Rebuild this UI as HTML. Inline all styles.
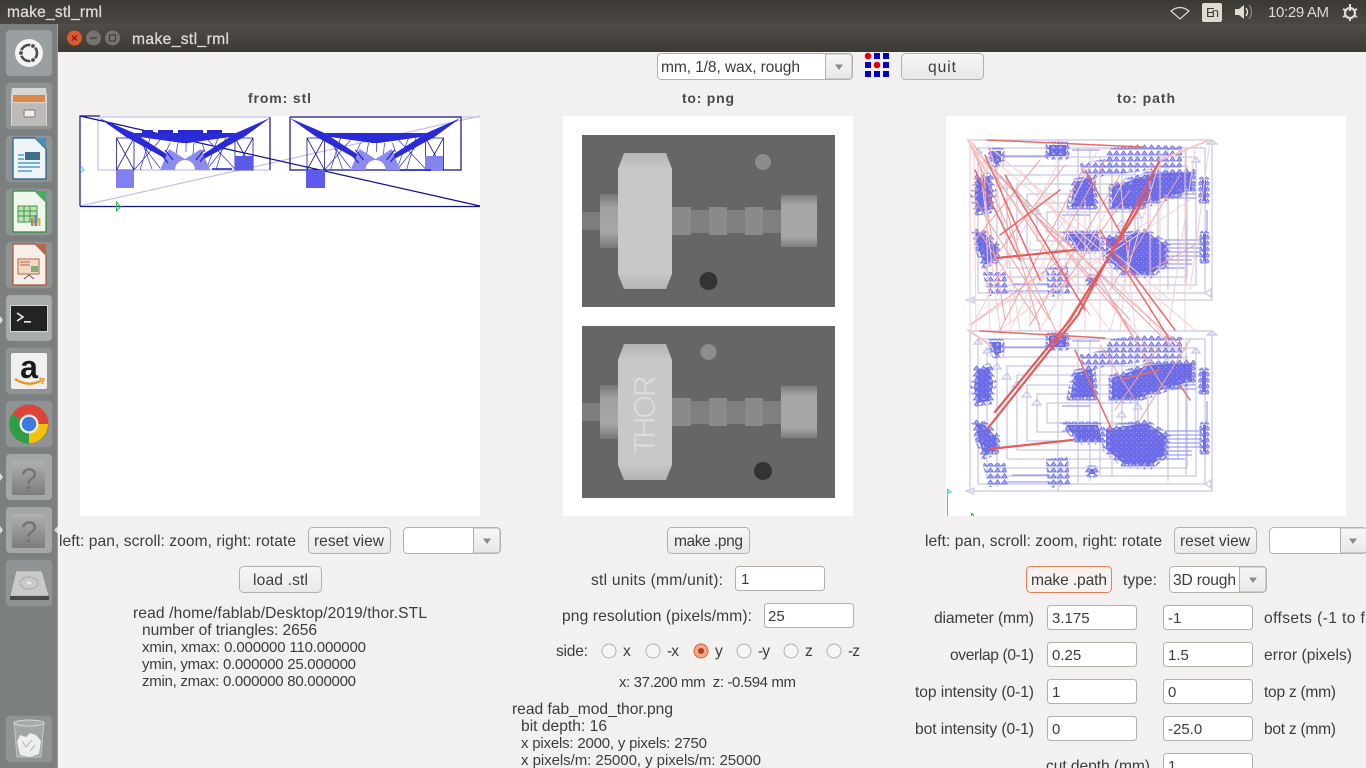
<!DOCTYPE html>
<html><head><meta charset="utf-8"><title>make_stl_rml</title>
<style>
html,body{margin:0;padding:0;width:1366px;height:768px;overflow:hidden;background:#f2f1f0}
svg{display:block}
text{font-family:"Liberation Sans",sans-serif;font-size:15.6px;fill:#3c3c3c}
.n{font-size:15px}
.b{font-weight:bold;font-size:14px;fill:#4a4a4a}
.t{fill:#dfdbd2;stroke:#dfdbd2;stroke-width:.3}
.btn{fill:url(#bg);stroke:#b3b1ac}
.inp{fill:#fff;stroke:#b3b1ac}
.tile{fill:#a4a8a8;fill-opacity:.5;stroke:#8d9192;stroke-width:.6}
.r{fill:#f7f6f5;stroke:#b3b1ac}
.d{fill:url(#dith);stroke:url(#tri);stroke-width:7;stroke-linejoin:round}
.s{fill:url(#tri);stroke:url(#tri);stroke-width:4;stroke-linejoin:round}
</style></head><body>
<svg width="1366" height="768" viewBox="0 0 1366 768" xmlns="http://www.w3.org/2000/svg">
<defs>
<linearGradient id="bg" x1="0" y1="0" x2="0" y2="1"><stop offset="0" stop-color="#f8f7f6"/><stop offset="1" stop-color="#e9e8e6"/></linearGradient>
<linearGradient id="top" x1="0" y1="0" x2="0" y2="1"><stop offset="0" stop-color="#3b3934"/><stop offset="1" stop-color="#4b4843"/></linearGradient>
<linearGradient id="tb" x1="0" y1="0" x2="0" y2="1"><stop offset="0" stop-color="#504c47"/><stop offset="1" stop-color="#3d3a36"/></linearGradient>
<linearGradient id="sh1" x1="0" y1="0" x2="0" y2="1"><stop offset="0" stop-color="#777"/><stop offset=".25" stop-color="#a0a0a0"/><stop offset=".7" stop-color="#a8a8a8"/><stop offset="1" stop-color="#777"/></linearGradient>
<linearGradient id="sh2" x1="0" y1="0" x2="0" y2="1"><stop offset="0" stop-color="#7d7d7d"/><stop offset=".2" stop-color="#a6a6a6"/><stop offset=".8" stop-color="#a6a6a6"/><stop offset="1" stop-color="#7d7d7d"/></linearGradient>
<linearGradient id="hd" x1="0" y1="0" x2="0" y2="1"><stop offset="0" stop-color="#b4b4b4"/><stop offset=".12" stop-color="#c8c8c8"/><stop offset=".88" stop-color="#c8c8c8"/><stop offset="1" stop-color="#b4b4b4"/></linearGradient>
<linearGradient id="q" x1="0" y1="0" x2="0" y2="1"><stop offset="0" stop-color="#b0b0b0"/><stop offset="1" stop-color="#7c7c7c"/></linearGradient>
<pattern id="dith" width="5" height="5" patternUnits="userSpaceOnUse"><rect width="5" height="5" fill="#6c6ce8"/><rect x="1" y="1" width="1" height="1" fill="#9a9af2"/><rect x="3" y="3" width="1" height="1" fill="#8a8af0"/></pattern>
<pattern id="tri" width="7" height="6" patternUnits="userSpaceOnUse"><path d="M0.500 5L3.500 .8L6.500 5Z" fill="#a8a8f0" stroke="#6a6ae0" stroke-width=".8"/></pattern>

<g id="png">
<rect x="582" y="135" width="253" height="172" fill="#666"/>
<rect x="582" y="212" width="18" height="18" fill="#7d7d7d"/>
<rect x="600" y="194" width="18" height="54" fill="url(#sh1)"/>
<rect x="672" y="207" width="19" height="28" fill="#8a8a8a"/>
<rect x="691" y="210" width="18" height="23" fill="#7f7f7f"/>
<rect x="709" y="207" width="18" height="28" fill="#8a8a8a"/>
<rect x="727" y="210" width="18" height="23" fill="#7f7f7f"/>
<rect x="745" y="207" width="18" height="28" fill="#8a8a8a"/>
<rect x="763" y="210" width="18" height="23" fill="#7f7f7f"/>
<rect x="781" y="195" width="36" height="52" fill="url(#sh2)"/>
<polygon points="624,153 666,153 672,169 672,274 666,289 624,289 618,274 618,169" fill="url(#hd)"/>
</g>

<g id="set">
<g fill="none" stroke="#c6c6e4" stroke-width="1.200">
<rect x="970" y="140" width="242" height="160"/>
<rect x="978" y="148" width="227" height="145"/>
<rect x="987" y="157" width="209" height="128"/>
<path d="M997 166H1187V277H997ZM1007 175H1178V268H1007ZM1017 184H1168V259H1017ZM1027 194H1158V250H1027ZM1037 203H1148V241H1037ZM1047 212H1138V232H1047Z"/>
<path d="M1058 140V300M1078 148V293M1090 150V290M1100 157V285M1112 155V285M1122 160V270M1135 160V275M1148 166V277M1168 148V290M1186 150V285"/>
<path d="M966 300l8-3v6zM1205 293l6-4v8zM1212 140l5 4-10 0zM1196 157l-4 5h8zM987 157l-4 5h8zM978 148l-4 5h8zM997 172l-5 6h9zM1007 182l-5 6h9zM1017 190l-5 6h9zM1027 200l-5 6h9zM1037 208l-5 6h9zM1122 220l-5 6h9zM1138 212l-4 6h8z"/>
</g>
<g fill="none" stroke="#8a8aea" stroke-width="1">
<path d="M1165 174H1196M1165 178H1196M1165 182H1196M1165 186H1196M1165 190H1196M1165 194H1196M1165 198H1196"/>
<path d="M1165 240H1202M1165 244H1202M1165 248H1202M1160 252H1200M1160 256H1200M1160 260H1192M1155 264H1192M1155 268H1185"/>
<path d="M1000 156H1050M1072 150H1100M1060 291H1005M1012 284H1050M1062 215H1090M1062 240H1100M1060 232H1075"/>
<path d="M1207 210V232"/>
</g>
<polygon class="s" points="1112,150 1140,146 1180,148 1180,166 1150,168 1120,172 1100,170"/>
<polygon class="s" points="1082,165 1112,160 1112,172 1086,178"/>
<polygon class="d" points="977,178 989,176 993,192 990,210 977,212 974,196"/>
<polygon class="d" points="975,232 985,234 997,247 996,260 984,265 979,250"/>
<polygon class="d" points="1049,145 1066,145 1066,156 1049,156"/>
<polygon class="d" points="991,151 1001,151 1001,162 995,164"/>
<polygon class="d" points="1075,182 1092,178 1095,206 1070,207"/>
<polygon class="d" points="1112,187 1150,174 1192,172 1192,190 1164,198 1136,208 1112,208"/>
<polygon class="d" points="1066,234 1098,234 1102,250 1078,250"/>
<polygon class="d" points="1106,238 1146,232 1167,245 1165,264 1150,275 1124,273 1106,258"/>
<rect class="d" x="1202" y="180" width="4" height="21"/>
<rect class="d" x="1203" y="234" width="3" height="27"/>
<polygon class="s" points="985,274 1004,274 1006,292 990,294"/>
<polygon class="s" points="1048,270 1066,268 1068,292 1050,295"/>
<polygon class="d" points="1089,278 1095,278 1095,283 1089,283"/>
</g>
</defs>

<!-- window background -->
<rect width="1366" height="768" fill="#f2f1f0"/>

<!-- launcher -->
<rect x="0" y="24" width="58" height="744" fill="#7b7f80"/>
<rect x="57" y="24" width="1" height="744" fill="#9a9d9e"/>
<rect x="6" y="30" width="46" height="46" rx="4" fill="#9aa0a2" stroke="#8d9192" stroke-width=".6"/>
<circle cx="29" cy="53" r="14" fill="#f4f4f2"/>
<circle cx="29" cy="53" r="8" fill="none" stroke="#4c4c4c" stroke-width="2.600"/>
<circle cx="21" cy="53" r="2.400" fill="#4c4c4c" stroke="#f4f4f2"/><circle cx="33" cy="46" r="2.400" fill="#4c4c4c" stroke="#f4f4f2"/><circle cx="33" cy="60" r="2.400" fill="#4c4c4c" stroke="#f4f4f2"/>

<rect x="6" y="83" width="46" height="46" class="tile" rx="4"/>
<path d="M12 88H46L47 96V126H11V96Z" fill="#d8d6d2"/><rect x="13" y="95" width="32" height="7" fill="#d9894a"/><rect x="12" y="103" width="34" height="23" fill="#bdbbb7"/><rect x="24" y="110" width="11" height="7" rx="1" fill="#efeeec" stroke="#7d7b78"/>

<rect x="6" y="136" width="46" height="46" class="tile" rx="4"/>
<path d="M13 138H35L46 149V179H13Z" fill="#eef3f6" stroke="#1f5f85" stroke-width="1.200"/><path d="M35 138L46 149V138Z" fill="#4a8db5"/><rect x="25" y="152" width="15" height="8" fill="#3d6f8f"/><path d="M18 155H24M18 159H24M18 163H40M18 167H40M18 171H32" stroke="#4f9dc6" stroke-width="1.600"/>

<rect x="6" y="189" width="46" height="46" class="tile" rx="4"/>
<path d="M13 191H35L46 202V232H13Z" fill="#f0f5ee" stroke="#2f8a3a" stroke-width="1.200"/><path d="M35 191L46 202V191Z" fill="#43b35a"/><path d="M18 206H37V222H18ZM18 211H37M18 216H37M24 206V222M30 206V222" fill="#bde3b5" stroke="#3d9a48" stroke-width="1"/><rect x="31" y="218" width="2.500" height="8" fill="#d97a3a"/><rect x="34.500" y="215" width="2.500" height="11" fill="#4a8db5"/><rect x="38" y="218" width="2.500" height="8" fill="#d9b83a"/>

<rect x="6" y="242" width="46" height="46" class="tile" rx="4"/>
<path d="M13 244H35L46 255V285H13Z" fill="#f6efe9" stroke="#a4583a" stroke-width="1.200"/><path d="M35 244L46 255V244Z" fill="#b96a45"/><rect x="18" y="259" width="21" height="15" fill="#f3d9c4" stroke="#b4673f"/><path d="M20 262H30M20 265H30" stroke="#b4673f"/><rect x="31" y="266" width="7" height="6" fill="#7fae7b"/><path d="M24 279L29 275L34 279" stroke="#555" fill="none"/>

<rect x="6" y="295" width="46" height="46" rx="4" fill="#a8acad" stroke="#8d9192" stroke-width=".6"/>
<rect x="10" y="305" width="38" height="27" fill="#d4d4d2"/><rect x="11" y="306" width="36" height="25" fill="#232323"/><path d="M17 313L23 317L17 321" stroke="#eee" stroke-width="1.600" fill="none"/><rect x="24" y="321" width="7" height="1.600" fill="#eee"/>

<rect x="6" y="348" width="46" height="46" class="tile" rx="4"/>
<rect x="11" y="353" width="36" height="36" rx="2" fill="#efefed"/>
<text x="29" y="378" text-anchor="middle" style="font-size:32px;font-weight:bold;fill:#1a1a1a">a</text>
<path d="M15 379Q29 388 42 380" stroke="#e8951e" stroke-width="2.200" fill="none"/><path d="M39 378L44 379L42 384" stroke="#e8951e" stroke-width="1.400" fill="none"/>

<rect x="6" y="401" width="46" height="46" class="tile" rx="4"/>
<circle cx="29" cy="424" r="19.500" fill="#db4437"/>
<path d="M29 424L12 414A19.500 19.500 0 0 0 19 441Z" fill="#2f9e44"/>
<path d="M29 424L19 441A19.500 19.500 0 0 0 29 443.500A19.500 19.500 0 0 0 47 431Z" fill="#2f9e44"/>
<path d="M29 424H48A19.500 19.500 0 0 1 29 443.500Z" fill="#f4c20d"/>
<circle cx="29" cy="424" r="9.500" fill="#f2f2f2"/><circle cx="29" cy="424" r="7.200" fill="#3f78e0"/>

<rect x="6" y="454" width="46" height="46" rx="4" fill="#a4a7a7"/>
<rect x="12" y="461" width="33" height="34" rx="2" fill="url(#q)"/>
<text x="29" y="489" text-anchor="middle" style="font-size:30px;fill:#747474">?</text>
<rect x="6" y="507" width="46" height="46" rx="4" fill="#a4a7a7"/>
<rect x="12" y="514" width="33" height="34" rx="2" fill="url(#q)"/>
<text x="29" y="542" text-anchor="middle" style="font-size:30px;fill:#747474">?</text>

<rect x="6" y="560" width="46" height="46" class="tile" rx="4"/>
<path d="M16 571H42L49 596H10Z" fill="#c8c9c8" stroke="#8a8b8a" stroke-width=".6"/><rect x="10" y="596" width="39" height="4" fill="#4a4a4a"/><ellipse cx="29" cy="583" rx="9" ry="6" fill="none" stroke="#a6a7a6"/><ellipse cx="29" cy="583" rx="2.500" ry="1.500" fill="#e8e8e8"/>

<rect x="6" y="716" width="46" height="46" class="tile" rx="4"/>
<path d="M14 722H44L41 757H17Z" fill="#a3a6a6" stroke="#c5c7c7"/><ellipse cx="29" cy="723" rx="15" ry="3" fill="#a8abab" stroke="#d4d5d5"/>
<path d="M17 742L20 735L26 737L30 733L36 735L41 741L39 754L30 757L20 755Z" fill="#eceded"/>
<path d="M22 741L26 747L32 740M35 745L30 751" stroke="#b5b7b7" fill="none"/>

<path d="M0 316L3 320L0 324ZM0 473L3 477L0 481ZM0 526L3 530L0 534Z" fill="#dcdddd"/>
<path d="M58 526L54 530L58 534Z" fill="#dcdddd"/>

<!-- top bar -->
<rect width="1366" height="24" fill="url(#top)"/>
<text x="7" y="17" textLength="95" class="t">make_stl_rml</text>
<path d="M1171 11Q1180 4 1189 11L1180 19Z" fill="none" stroke="#dfdbd2" stroke-width="1.200"/>
<rect x="1202" y="3" width="20" height="19" rx="2" fill="#dfdbd2"/>
<text x="1206" y="17" textLength="13" style="font-size:13px;fill:#3c3a36">En</text>
<path d="M1235 9H1239L1244 5V19L1239 15H1235Z" fill="#dfdbd2"/><path d="M1246 8Q1249 12 1246 16" stroke="#dfdbd2" stroke-width="1.400" fill="none"/><path d="M1249 5Q1254 12 1249 19" stroke="#8a8780" stroke-width="1.200" fill="none"/>
<text x="1268" y="17" textLength="61" class="n" style="fill:#dfdbd2">10:29 AM</text>
<circle cx="1350" cy="13" r="5" fill="none" stroke="#dfdbd2" stroke-width="2.200"/>
<path d="M1350 4V11M1343 9L1345 10M1357 9L1355 10M1343 17L1345 16M1357 17L1355 16M1350 19V21" stroke="#dfdbd2" stroke-width="2"/>

<!-- title bar -->
<rect x="58" y="24" width="1308" height="28" fill="url(#tb)"/>
<circle cx="74.500" cy="38" r="7.500" fill="#e0582b"/><path d="M72 35.500L77 40.500M77 35.500L72 40.500" stroke="#5a2410" stroke-width="1.100"/>
<circle cx="93.500" cy="38" r="7.500" fill="#76736d"/><rect x="90" y="37.500" width="7" height="1.300" fill="#3f3d39"/>
<circle cx="112.500" cy="38" r="7.500" fill="#76736d"/><rect x="109.500" y="35" width="6" height="6" fill="none" stroke="#3f3d39" stroke-width="1.100"/>
<text x="132" y="44" textLength="97" class="t">make_stl_rml</text>

<!-- toolbar -->
<rect x="657.500" y="53.500" width="195" height="26" rx="4" class="inp"/>
<path d="M825.500 54H849a3 3 0 0 1 3 3V76a3 3 0 0 1-3 3H825.500Z" fill="url(#bg)" stroke="#b3b1ac"/>
<path d="M835 64.500H843L839 70Z" fill="#8a8a8a"/>
<text x="661" y="72" textLength="139">mm, 1/8, wax, rough</text>
<g fill="#0000c8"><rect x="874" y="53" width="6" height="6"/><rect x="883" y="53" width="6" height="6"/><rect x="865" y="62" width="6" height="6"/><rect x="883" y="62" width="6" height="6"/><rect x="865" y="71" width="6" height="6"/><rect x="874" y="71" width="6" height="6"/><rect x="883" y="71" width="6" height="6"/></g>
<circle cx="868" cy="56" r="3.300" fill="#e00010"/><circle cx="877" cy="65" r="3.300" fill="#e00010"/>
<rect x="901.500" y="53.500" width="82" height="26" rx="4" class="btn"/>
<text x="928" y="72" textLength="28">quit</text>

<text x="248" y="103" textLength="63" class="b">from: stl</text>
<text x="682" y="103" textLength="52" class="b">to: png</text>
<text x="1117" y="103" textLength="58" class="b">to: path</text>

<!-- STL canvas -->
<rect x="80" y="116" width="400" height="400" fill="#fff"/>
<g fill="none">
<path d="M100 117H270M461 117H480M80 206L480 116M98 117V170H270" stroke="#c0c0e6" stroke-width="1.200"/>
<path d="M80 206V116H100M80 116L480 206M80 206.500H480M270 117V170M290 117H461V170H290V117" stroke="#101088" stroke-width="1.200"/>
</g>
<g id="fan">
<g fill="none" stroke="#1a1a88" stroke-width=".8">
<path d="M116.500 138H134V170H116.500ZM116.500 138L134 170M134 138L116.500 170M235 138H253V170H235ZM235 138L253 170M253 138L235 170"/>
</g>
<g fill="none" stroke="#3030d0" stroke-width=".7">
<path d="M134 134L160 168M140 136L152 169M150 138L140 170M160 140L134 170M170 143L166 152M178 143L176 154M186 143V152M194 143L193 154M202 143L205 152M208 140L236 170M218 138L206 170M226 136L216 170M235 134L208 168"/>
</g>
<g fill="#2a2ad8">
<polygon points="99,118 134,133 176,160 168,160 126,137"/>
<polygon points="270,118 236,133 194,160 202,160 244,137"/>
<polygon points="134,133 236,133 230,137 188,143 182,143 140,137"/>
</g>
<path d="M160 170L169 149L185 159L201 149L210 170H195A10 10 0 0 0 175 170Z" fill="#8c8cf0"/>
<path d="M160 153L168 163M165 150L173 160M208 152L200 162M204 150L196 160" stroke="#2222c8" stroke-width="1.200"/>
</g>
<use href="#fan" x="190.500"/>
<g fill="#2828d0"><rect x="142" y="130" width="11" height="4"/><rect x="158" y="130" width="15" height="4"/><rect x="178" y="130" width="25" height="4"/><rect x="207" y="130" width="15" height="4"/></g>
<rect x="235" y="156" width="18" height="14" fill="#5a5ae8"/>
<rect x="116" y="170" width="18" height="18" fill="#8080f0"/>
<rect x="306" y="170" width="19" height="18" fill="#5c5ce8"/>
<rect x="425" y="156" width="18" height="15" fill="#8484f0"/>
<path d="M400 170H431M212 169H232" stroke="#1a1ad0" stroke-width="1.500"/>
<path d="M81 166L84 170L81 172" fill="none" stroke="#20d0d8"/>
<path d="M116.500 202V211L120.500 207Z" fill="none" stroke="#20c040"/>

<!-- PNG canvas -->
<rect x="563" y="116" width="290" height="400" fill="#fff"/>
<use href="#png"/>
<use href="#png" y="191"/>
<circle cx="763" cy="162" r="8" fill="#8c8c8c"/>
<circle cx="708.500" cy="281" r="9" fill="#333"/>
<circle cx="708.500" cy="352" r="8" fill="#8c8c8c"/>
<circle cx="763" cy="471" r="9" fill="#333"/>
<text transform="translate(655 455) rotate(-90)" textLength="80" style="font-size:31px;fill:#dedede;stroke:#c8c8c8;stroke-width:.9">THOR</text>

<!-- Path canvas -->
<rect x="946" y="116" width="400" height="400" fill="#fff"/>
<use href="#set"/>
<use href="#set" y="191"/>
<g fill="none" stroke-linecap="round">
<path stroke="#f8cfcf" stroke-width="1" d="M968 140L1110 330M970 145V325M974 145L976 330M978 150L1000 330M984 160L990 330M987 145L1170 300M994 170L1020 330M1000 165L1195 330M1020 170L1185 360M1040 190L1130 330M1060 160L970 330M1100 145L1010 330M1130 170L1040 330M1160 160L1110 330M1185 150V330M1150 165V325M1120 180L1135 330M1085 200V330M978 320L1090 250M1000 330L1150 220M1040 300L1190 200M1195 150L1170 320M1210 140L1190 290M1160 150L1160 330M1130 240L1120 330M1100 210L1100 330M1070 210L1060 330M1010 200L1010 325M1030 240L1030 330"/>
<path stroke="#f2a3a3" stroke-width="1" d="M968 140L1060 340M972 142L1090 315M985 160L1130 320M1000 175L1150 350M1015 190L1170 345M1035 215L1185 350M980 165L1005 320M990 150L1040 330M1065 165L985 270M1040 160L975 240M1085 165L1000 330M1120 175L1030 325M1145 200L1065 325M1180 175L1110 290M970 325L1060 260M1150 270L1195 245M1095 270L1135 340M1110 300L1165 390M975 200L1050 320M978 230L1040 325M1105 160L1040 280M1130 190L1060 290M1190 340L1140 420M1160 345L1115 410M1100 345L1135 400"/>
<path stroke="#e86a6a" stroke-width="1.500" d="M987 140L1142 147M980 331L1105 338M1085 170L1130 250M1075 350L1112 430M1060 190L1000 235M975 170L1020 260M985 155L1040 280M1005 175L1085 310M1100 230L1170 340M1130 270L1175 330M1120 380L1160 370M1180 385L1190 400"/>
<path stroke="#e65a5a" stroke-width="2.200" d="M1160 160L1078 315L988 428M1150 190L1070 320L995 412M997 258L1075 250M990 449L1072 440"/>
<path stroke="#f8c4c4" stroke-width="2" d="M968 140L985 170M1210 140L1160 160M968 330L990 345"/>
</g>
<path d="M947.500 516V489M947.500 489L951 492L947.500 493" fill="none" stroke="#30d0e0" stroke-width="1.100"/>
<path d="M971.500 513V516M971.500 513L974 516" fill="none" stroke="#20c040"/>

<!-- bottom rows left -->
<text x="59" y="546" textLength="237">left: pan, scroll: zoom, right: rotate</text>
<rect x="308.500" y="527.500" width="82" height="26" rx="4" class="btn"/>
<text x="314" y="546" textLength="70">reset view</text>
<rect x="403.500" y="527.500" width="97" height="26" rx="4" class="inp"/>
<path d="M473.500 528H497a3 3 0 0 1 3 3V550a3 3 0 0 1-3 3H473.500Z" fill="url(#bg)" stroke="#b3b1ac"/>
<path d="M483 538.500H491L487 544Z" fill="#8a8a8a"/>
<rect x="239.500" y="566.500" width="82" height="26" rx="4" class="btn"/>
<text x="253" y="585" textLength="55">load .stl</text>
<text x="133" y="618" textLength="294">read /home/fablab/Desktop/2019/thor.STL</text>
<text x="142" y="635" textLength="175">number of triangles: 2656</text>
<text x="142" y="652" textLength="224" class="n">xmin, xmax: 0.000000 110.000000</text>
<text x="142" y="669" textLength="214" class="n">ymin, ymax: 0.000000 25.000000</text>
<text x="142" y="686" textLength="214" class="n">zmin, zmax: 0.000000 80.000000</text>

<!-- middle column -->
<rect x="667.500" y="527.500" width="82" height="26" rx="4" class="btn"/>
<text x="674" y="546" textLength="69">make .png</text>
<text x="591" y="585" textLength="132">stl units (mm/unit):</text>
<rect x="735.500" y="566.500" width="89" height="24" rx="3" class="inp"/>
<text x="741" y="584" class="n">1</text>
<text x="562" y="621" textLength="190">png resolution (pixels/mm):</text>
<rect x="764.500" y="603.500" width="89" height="24" rx="3" class="inp"/>
<text x="768" y="621" class="n">25</text>
<text x="556" y="656" textLength="32">side:</text>
<circle cx="609" cy="651" r="7" class="r"/><text x="623" y="656">x</text>
<circle cx="653" cy="651" r="7" class="r"/><text x="667" y="656" textLength="12">-x</text>
<circle cx="701" cy="651" r="7" fill="#f0a78c" stroke="#d9603a"/><circle cx="701" cy="651" r="3" fill="#b5411c"/><text x="715" y="656">y</text>
<circle cx="744" cy="651" r="7" class="r"/><text x="758" y="656" textLength="12">-y</text>
<circle cx="791" cy="651" r="7" class="r"/><text x="805" y="656">z</text>
<circle cx="834" cy="651" r="7" class="r"/><text x="848" y="656" textLength="12">-z</text>
<text x="619" y="687" textLength="177" class="n">x: 37.200 mm&#160;&#160;z: -0.594 mm</text>
<text x="512" y="714" textLength="161">read fab_mod_thor.png</text>
<text x="521" y="731" textLength="86">bit depth: 16</text>
<text x="521" y="748" textLength="186" class="n">x pixels: 2000, y pixels: 2750</text>
<text x="521" y="765" textLength="240" class="n">x pixels/m: 25000, y pixels/m: 25000</text>

<!-- right column -->
<text x="925" y="546" textLength="237">left: pan, scroll: zoom, right: rotate</text>
<rect x="1174.500" y="527.500" width="82" height="26" rx="4" class="btn"/>
<text x="1180" y="546" textLength="70">reset view</text>
<rect x="1269.500" y="527.500" width="97" height="26" rx="4" class="inp"/>
<path d="M1340.500 528H1364a3 3 0 0 1 3 3V550a3 3 0 0 1-3 3H1340.500Z" fill="url(#bg)" stroke="#b3b1ac"/>
<path d="M1349 538.500H1357L1353 544Z" fill="#8a8a8a"/>

<rect x="1026.500" y="566.500" width="85" height="26" rx="4" fill="#f5f2ef" stroke="#e8805a"/>
<text x="1031" y="585" textLength="76">make .path</text>
<text x="1123" y="585" textLength="34">type:</text>
<rect x="1169.500" y="566.500" width="97" height="26" rx="4" class="inp"/>
<path d="M1239.500 567H1263a3 3 0 0 1 3 3V589a3 3 0 0 1-3 3H1239.500Z" fill="url(#bg)" stroke="#b3b1ac"/>
<path d="M1249 577.500H1257L1253 583Z" fill="#8a8a8a"/>
<text x="1173" y="585" textLength="63">3D rough</text>

<text x="934" y="623" textLength="100">diameter (mm)</text>
<rect x="1047.500" y="605.500" width="89" height="24" rx="3" class="inp"/><text x="1052" y="623" class="n">3.175</text>
<rect x="1163.500" y="605.500" width="89" height="24" rx="3" class="inp"/><text x="1168" y="623" class="n">-1</text>
<text x="1264" y="623" textLength="118">offsets (-1 to fill)</text>

<text x="950" y="660" textLength="84">overlap (0-1)</text>
<rect x="1047.500" y="642.500" width="89" height="24" rx="3" class="inp"/><text x="1052" y="660" class="n">0.25</text>
<rect x="1163.500" y="642.500" width="89" height="24" rx="3" class="inp"/><text x="1168" y="660" class="n">1.5</text>
<text x="1264" y="660" textLength="88">error (pixels)</text>

<text x="915" y="697" textLength="119">top intensity (0-1)</text>
<rect x="1047.500" y="679.500" width="89" height="24" rx="3" class="inp"/><text x="1052" y="697" class="n">1</text>
<rect x="1163.500" y="679.500" width="89" height="24" rx="3" class="inp"/><text x="1168" y="697" class="n">0</text>
<text x="1264" y="697" textLength="72">top z (mm)</text>

<text x="915" y="734" textLength="119">bot intensity (0-1)</text>
<rect x="1047.500" y="716.500" width="89" height="24" rx="3" class="inp"/><text x="1052" y="734" class="n">0</text>
<rect x="1163.500" y="716.500" width="89" height="24" rx="3" class="inp"/><text x="1168" y="734" class="n">-25.0</text>
<text x="1264" y="734" textLength="72">bot z (mm)</text>

<text x="1046" y="771" textLength="104">cut depth (mm)</text>
<rect x="1163.500" y="753.500" width="89" height="24" rx="3" class="inp"/><text x="1168" y="771" class="n">1</text>
</svg>
</body></html>
